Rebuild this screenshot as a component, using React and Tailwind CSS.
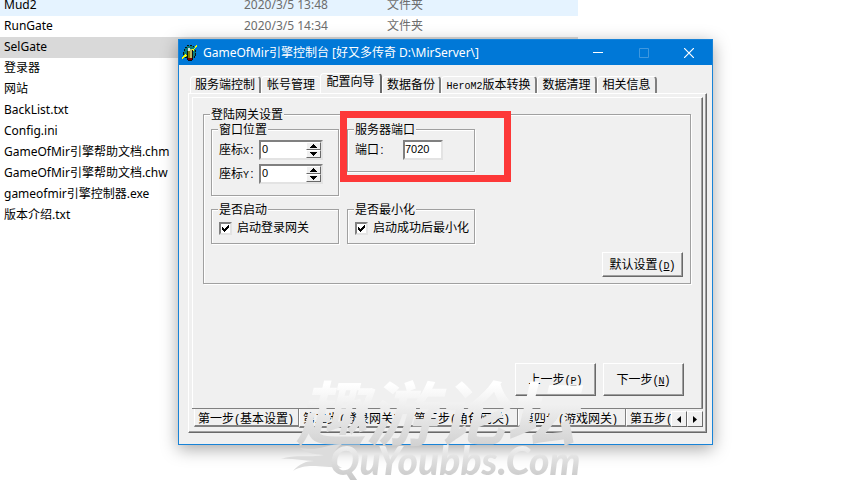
import React from "react";

const files = [
  { name: "Mud2", date: "2020/3/5 13:48", type: "文件夹", row: "bg-[#e5f3ff]" },
  { name: "RunGate", date: "2020/3/5 14:34", type: "文件夹", row: "" },
  { name: "SelGate", row: "bg-[#d9d9d9]" },
  { name: "登录器", row: "" },
  { name: "网站", row: "" },
  { name: "BackList.txt", row: "" },
  { name: "Config.ini", row: "" },
  { name: "GameOfMir引擎帮助文档.chm", row: "" },
  { name: "GameOfMir引擎帮助文档.chw", row: "" },
  { name: "gameofmir引擎控制器.exe", row: "" },
  { name: "版本介绍.txt", row: "" },
];

const raised = "border border-t-white border-l-white border-r-[#696969] border-b-[#696969]";
const sunken = "border-2 border-t-[#808080] border-l-[#808080] border-r-[#e3e3e3] border-b-[#e3e3e3] bg-white";

function Latin({ children }) {
  return <span className="font-['Liberation_Mono',monospace] text-[10px]">{children}</span>;
}

function Mark({ children }) {
  return <span className="inline-block w-[6px] text-center">{children}</span>;
}

function Group({ title, className, children }) {
  return (
    <fieldset className={"min-w-0 border border-[#a0a0a0] px-[7px] shadow-[1px_1px_0_#fff,inset_1px_1px_0_#fff] " + className}>
      <legend className="-ml-px h-3 bg-[#f0f0f0] px-px leading-[14px]">{title}</legend>
      {children}
    </fieldset>
  );
}

function SpinRow({ id, axis }) {
  return (
    <div className="flex h-5 items-center">
      <label htmlFor={id} className="w-10">座标<Latin>{axis}</Latin><Mark>:</Mark></label>
      <div className={"flex h-5 w-16 " + sunken}>
        <input id={id} defaultValue="0" className="min-w-0 flex-1 bg-white pb-[3px] pl-px font-['Liberation_Sans',sans-serif] text-[11px] leading-3 outline-none" />
        <div className="flex w-[15px] flex-col">
          {["up", "down"].map((d) => (
            <button key={d} aria-label={d} className={"flex flex-1 items-center justify-center bg-[#f0f0f0] " + raised}>
              <svg width="7" height="4" viewBox="0 0 7 4" shapeRendering="crispEdges">
                <path d={d === "up" ? "M3 0h1v1h1v1h1v1h1v1H0V3h1V2h1V1h1z" : "M0 0h7v1H6v1H5v1H4v1H3V3H2V2H1V1H0z"} />
              </svg>
            </button>
          ))}
        </div>
      </div>
    </div>
  );
}

function Check({ label }) {
  return (
    <label className="mt-[5px] flex h-4 items-center gap-[5px] whitespace-nowrap">
      <span className="relative h-[13px] w-[13px]">
        <input type="checkbox" defaultChecked className={"block h-[13px] w-[13px] appearance-none " + sunken} />
        <svg className="pointer-events-none absolute left-[3px] top-[3px]" width="7" height="7" shapeRendering="crispEdges">
          <path d="M0 2h1v1h1v1h1V3h1V2h1V1h1V0h1v3H6v1H5v1H4v1H3v1H2V6H1V5H0z" />
        </svg>
      </span>
      {label}
    </label>
  );
}

function PushButton({ children, className }) {
  return (
    <button className={"bg-[#f0f0f0] text-center shadow-[inset_-1px_-1px_0_#a0a0a0] " + raised + " " + className}>
      {children}
    </button>
  );
}

function Hotkey({ letter }) {
  return <><Mark>(</Mark><Latin><u>{letter}</u></Latin><Mark>)</Mark></>;
}

const tabs = [
  { label: "服务端控制", w: "w-[71px]" },
  { label: "帐号管理", w: "w-[59px]" },
  { label: "配置向导", w: "w-[62px]", active: true },
  { label: "数据备份", w: "w-[59px]" },
  { label: <><Latin>HeroM2</Latin>版本转换</>, w: "w-[96px]" },
  { label: "数据清理", w: "w-[60px]" },
  { label: "相关信息", w: "w-[60px]" },
];

const steps = [
  { label: "第一步", sub: "基本设置", w: "w-[105px]" },
  { label: "第二步", sub: "登录网关", w: "w-[111px]", active: true },
  { label: "第三步", sub: "角色网关", w: "w-[108px]" },
  { label: "第四步", sub: "游戏网关", w: "w-[108px]" },
  { label: "第五步", sub: "", w: "w-[45px]" },
];

function AppIcon() {
  return (
    <svg width="16" height="16" viewBox="0 0 16 16" shapeRendering="crispEdges">
      <path fill="#087c7c" d="M5 1h6v1h1v1h1v2h1v6h-1v2h-2V7H6v5H3v-1H2V5h1V3h1V2h1z" />
      <path fill="#111" d="M5 0h2v1H5zM8 0h2v1H8zM3 2h2v1H3zM11 1h1v1h-1zM2 4h1v2H2zM1 7h1v3H1zM13 5h1v2h-1zM14 8h-1v3h1zM12 11h1v2h-1zM5 6h1v9H5zM10 5h1v10h-1zM6 15h4v1H6zM3 12h2v1H3z" />
      <path fill="#ddd" d="M6 3h2v3H6z" />
      <path fill="#858000" d="M6 6h2v7H6z" />
      <path fill="#c0b860" d="M8 4h2v9H8z" />
      <path fill="#ff0" d="M15 0v2h-1v1h-1v1h-1v2h-1V5h-1V4h2V3h1V1h1V0zM0 13v-1h1v-1h1v-1h1V9h1v1h1v1H4v1H2v1H1v1H0z" />
      <path fill="#800000" d="M6 13h4v2H6z" />
    </svg>
  );
}

function Watermark() {
  return (
    <div className="pointer-events-none absolute left-[280px] top-[368px] h-[112px] w-[310px]">
      <div className="absolute left-4 top-0 whitespace-nowrap bg-gradient-to-b from-white from-20% to-[#cdcdcd] bg-clip-text pr-3 font-['Noto_Sans_CJK_SC',sans-serif] text-[70px] font-bold italic leading-[84px] text-transparent">
        趣游论坛
      </div>
      <svg className="absolute left-0 top-[76px]" width="64" height="32" viewBox="0 0 64 32">
        <path fill="#dcdcdc" d="M62 0C48 0 38 8 20 4c7 6 17 6 24 7C30 14 14 10 1 15c12-1 21 2 33 2-8 0-15 3-21 10 13-8 26-4 49-3C50 18 50 8 62 0z" />
      </svg>
      <div className="absolute left-[50px] top-[72px] whitespace-nowrap bg-gradient-to-b from-[#f6f6f6] to-[#c8c8c8] bg-clip-text pr-2 font-[Lato,sans-serif] text-[39px] font-black italic leading-10 text-transparent">
        QuYoubbs.Com
      </div>
    </div>
  );
}

export default function App() {
  return (
    <main className="relative min-h-screen overflow-hidden bg-white font-['Liberation_Sans','Noto_Sans_CJK_SC',sans-serif] text-[12px] text-black">
      <table className="-mt-[5px] w-[578px] table-fixed border-collapse font-['Noto_Sans','Noto_Sans_CJK_SC',sans-serif] leading-5">
        <tbody>
          {files.map((f) => (
            <tr key={f.name} className={"h-[21px] " + f.row}>
              <td className="w-[244px] whitespace-nowrap pb-px pl-1">{f.name}</td>
              <td className="w-[143px] pb-px text-[#6d6d6d]">{f.date}</td>
              <td className="pb-px text-[#6d6d6d]">{f.type}</td>
            </tr>
          ))}
        </tbody>
      </table>

      <section className="absolute left-[178px] top-[39px] w-[535px] border border-[#1883d7] bg-[#f0f0f0] shadow-[0_4px_16px_rgba(0,0,0,0.35)]">
        <header className="flex h-[25px] items-center bg-[#0078d7] pl-[3px] text-white">
          <AppIcon />
          <h1 className="flex-1 whitespace-nowrap pl-[5px] font-['Noto_Sans','Noto_Sans_CJK_SC',sans-serif]">GameOfMir引擎控制台 [好又多传奇 D:\MirServer\]</h1>
          <button aria-label="minimize" className="flex h-full w-[46px] items-center justify-center"><svg width="10" height="10"><path stroke="#fff" d="M0 4.5h10" /></svg></button>
          <button aria-label="maximize" className="flex h-full w-[45px] items-center justify-center"><svg width="10" height="10"><path fill="none" stroke="#3f98df" d="M.5.5h9v9h-9z" /></svg></button>
          <button aria-label="close" className="flex h-full w-[46px] items-center justify-center"><svg width="10" height="10"><path fill="none" stroke="#fff" strokeWidth="1.2" d="M0 0l10 10M10 0L0 10" /></svg></button>
        </header>

        <div className="pb-[11px] pl-[9px] pr-[5px] pt-2">
          <nav className="flex h-5 items-end px-[2px]">
            {tabs.map((t, i) => (
              <button
                key={i}
                className={
                  "whitespace-nowrap rounded-t-sm border-l border-t border-white text-center leading-4 " + t.w +
                  (t.active ? " h-5 border-r-2 border-r-[#696969] pb-[3px]" : i === 1 ? " h-[17px]" : " h-[17px] border-r-2 border-r-[#808080]")
                }
              >
                {t.label}
              </button>
            ))}
          </nav>

          <div className="border border-b-[#696969] border-l-white border-r-[#696969] border-t-white p-[3px] shadow-[inset_-1px_-1px_0_#a0a0a0]">
            <div className="border border-b-0 border-l-white border-r-[#696969] border-t-white shadow-[inset_-1px_0_0_#a0a0a0]">
              <div className="pb-3 pl-[10px] pr-[7px] pt-[10px]">
                <Group title="登陆网关设置" className="mr-1 h-44">
                  <div className="flex items-start gap-2 pt-[3px]">
                    <Group title="窗口位置" className="h-[73px] w-32">
                      <div className="flex flex-col gap-1 pt-[5px]">
                        <SpinRow id="pos-x" axis="X" />
                        <SpinRow id="pos-y" axis="Y" />
                      </div>
                    </Group>
                    <Group title="服务器端口" className="h-[49px] w-32">
                      <div className="flex items-center pt-[5px]">
                        <label htmlFor="port" className="w-[48px]">端口<Mark>:</Mark></label>
                        <input id="port" defaultValue="7020" className={"h-5 w-10 pb-[3px] font-['Liberation_Sans',sans-serif] text-[11px] leading-3 outline-none " + sunken} />
                      </div>
                    </Group>
                  </div>
                  <div className="mt-[7px] flex gap-2">
                    <Group title="是否启动" className="h-[41px] w-32"><Check label="启动登录网关" /></Group>
                    <Group title="是否最小化" className="h-[41px] w-32"><Check label="启动成功后最小化" /></Group>
                  </div>
                  <div className="mt-2 flex justify-end">
                    <PushButton className="h-[25px] w-[81px]">默认设置<Hotkey letter="D" /></PushButton>
                  </div>
                </Group>
                <div className="mr-[11px] mt-[79px] flex justify-end gap-[7px]">
                  <PushButton className="h-[33px] w-[81px]">上一步<Hotkey letter="P" /></PushButton>
                  <PushButton className="h-[33px] w-[81px]">下一步<Hotkey letter="N" /></PushButton>
                </div>
              </div>
            </div>
            <div className="flex h-[21px] border-t border-[#808080] pl-[2px]">
              {steps.map((s) => (
                <button
                  key={s.label}
                  className={"overflow-hidden whitespace-nowrap border-b-2 border-l border-b-[#808080] border-l-white pl-[3px] pt-[2px] text-left leading-4 " + s.w + (s.active ? " h-[19px]" : s.sub ? " h-[18px] border-r border-r-[#808080]" : " h-[18px]")}
                >
                  {s.label}<Mark>(</Mark>{s.sub}{s.sub && <Mark>)</Mark>}
                </button>
              ))}
              <button aria-label="previous steps" className={"mt-[2px] flex h-4 w-4 items-center justify-center " + raised}><svg width="4" height="7"><path d="M4 0v7L0 3.5z" /></svg></button>
              <button aria-label="next steps" className={"mt-[2px] flex h-4 w-4 items-center justify-center " + raised}><svg width="4" height="7"><path d="M0 0v7l4-3.5z" /></svg></button>
            </div>
          </div>
        </div>
      </section>

      <div className="pointer-events-none absolute left-[340px] top-[111px] h-[71px] w-[171px] border-[7px] border-[#fd3838]" />
      <Watermark />
    </main>
  );
}
